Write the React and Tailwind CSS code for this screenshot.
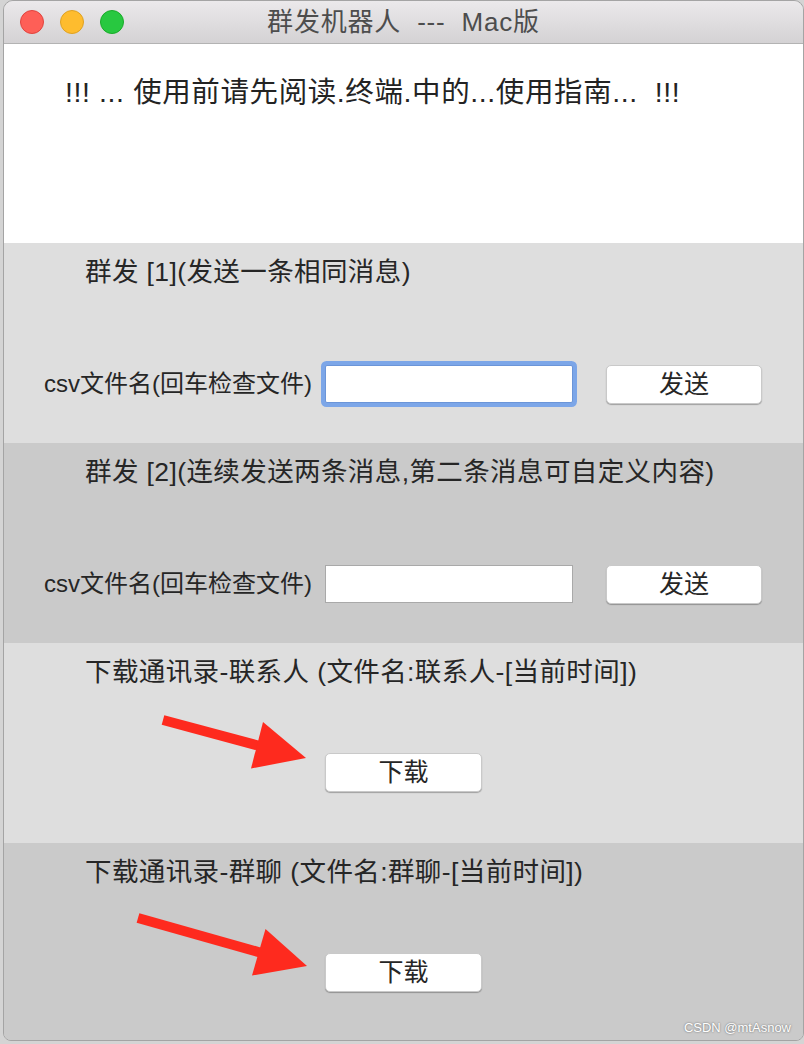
import React from "react";

function Btn({ children, w = "w-[156px]" }) {
  return (
    <div
      className={`${w} h-[39px] bg-white rounded-[5px] border border-[#c9c9c9] shadow-[0_1px_1px_rgba(0,0,0,0.28)] flex items-center justify-center text-[25px] text-[#262626] leading-none`}
    >
      {children}
    </div>
  );
}

function Title({ children }) {
  return (
    <div className="pt-[12px] pl-[81px] text-[26.5px] tracking-[0.4px] leading-[34px] text-[#262626] whitespace-pre">
      {children}
    </div>
  );
}

function CsvRow({ focused }) {
  return (
    <div className="mt-[70px] h-[50px] flex items-center pl-[40px]">
      <div className="w-[281px] text-[24px] text-[#262626] whitespace-nowrap">
        csv文件名(回车检查文件)
      </div>
      {focused ? (
        <div className="w-[248px] h-[38px] bg-white border border-[#6b95d8] rounded-[2px] ring-[4px] ring-[#7ca6e8]" />
      ) : (
        <div className="w-[248px] h-[38px] bg-white border border-[#a9a9a9]" />
      )}
      <div className="ml-[33px]">
        <Btn>发送</Btn>
      </div>
    </div>
  );
}

export default function App() {
  return (
    <div className="relative w-[804px] h-[1044px] overflow-hidden bg-[#d4d4d4] font-['Liberation_Sans','Noto_Sans_CJK_SC',sans-serif]">
      <div className="relative ml-[3px] w-[801px] h-[1041px] border border-[#a4a4a4] rounded-t-[10px] rounded-b-[8px] overflow-hidden">
        {/* title bar */}
        <div className="h-[43px] border-b border-[#b3b3b3] bg-gradient-to-b from-[#ebe9eb] to-[#d4d2d4] grid grid-cols-[1fr_auto_1fr] items-center">
          <div className="flex items-center gap-[16px] pl-[16px]">
            <div className="w-[24px] h-[24px] rounded-full bg-[#fe5f57] border border-[#e0443e]" />
            <div className="w-[24px] h-[24px] rounded-full bg-[#febc2e] border border-[#dea123]" />
            <div className="w-[24px] h-[24px] rounded-full bg-[#28c840] border border-[#1aab29]" />
          </div>
          <div className="text-[26px] tracking-[0.8px] text-[#4d4d4d] whitespace-pre leading-none">
            群发机器人  ---  Mac版
          </div>
          <div />
        </div>

        {/* notice */}
        <div className="h-[199px] bg-white pl-[61px] pt-[30px]">
          <div className="text-[28.5px] tracking-[0.6px] leading-[36px] text-[#232323] whitespace-pre">
            !!! ... 使用前请先阅读.终端.中的...使用指南...  !!!
          </div>
        </div>

        {/* section 1 */}
        <div className="h-[200px] bg-[#dedede]">
          <Title>群发 [1](发送一条相同消息)</Title>
          <CsvRow focused />
        </div>

        {/* section 2 */}
        <div className="h-[200px] bg-[#cacaca]">
          <Title>群发 [2](连续发送两条消息,第二条消息可自定义内容)</Title>
          <CsvRow />
        </div>

        {/* section 3 */}
        <div className="h-[200px] bg-[#dedede]">
          <Title>下载通讯录-联系人 (文件名:联系人-[当前时间])</Title>
          <div className="mt-[58px] h-[50px] flex items-center pl-[321px]">
            <Btn w="w-[157px]">下载</Btn>
          </div>
        </div>

        {/* section 4 */}
        <div className="h-[197px] bg-[#cacaca]">
          <Title>下载通讯录-群聊 (文件名:群聊-[当前时间])</Title>
          <div className="mt-[58px] h-[50px] flex items-center pl-[321px]">
            <Btn w="w-[157px]">下载</Btn>
          </div>
        </div>

        <div className="absolute right-[12px] bottom-[6px] text-[13px] leading-none text-white [text-shadow:0_0_2px_rgba(0,0,0,0.55)]">
          CSDN @mtAsnow
        </div>
      </div>

      {/* red annotation arrows */}
      <svg
        className="absolute left-0 top-0 pointer-events-none"
        width="804"
        height="1044"
        viewBox="0 0 804 1044"
      >
        <line x1="163" y1="720" x2="258" y2="745.5" stroke="#fe2a1e" strokeWidth="10" />
        <polygon points="306,758 251,768.5 263,722" fill="#fe2a1e" />
        <line x1="138" y1="918" x2="260" y2="952.5" stroke="#fe2a1e" strokeWidth="10" />
        <polygon points="307,966 252,975.5 265.5,929" fill="#fe2a1e" />
      </svg>
    </div>
  );
}
